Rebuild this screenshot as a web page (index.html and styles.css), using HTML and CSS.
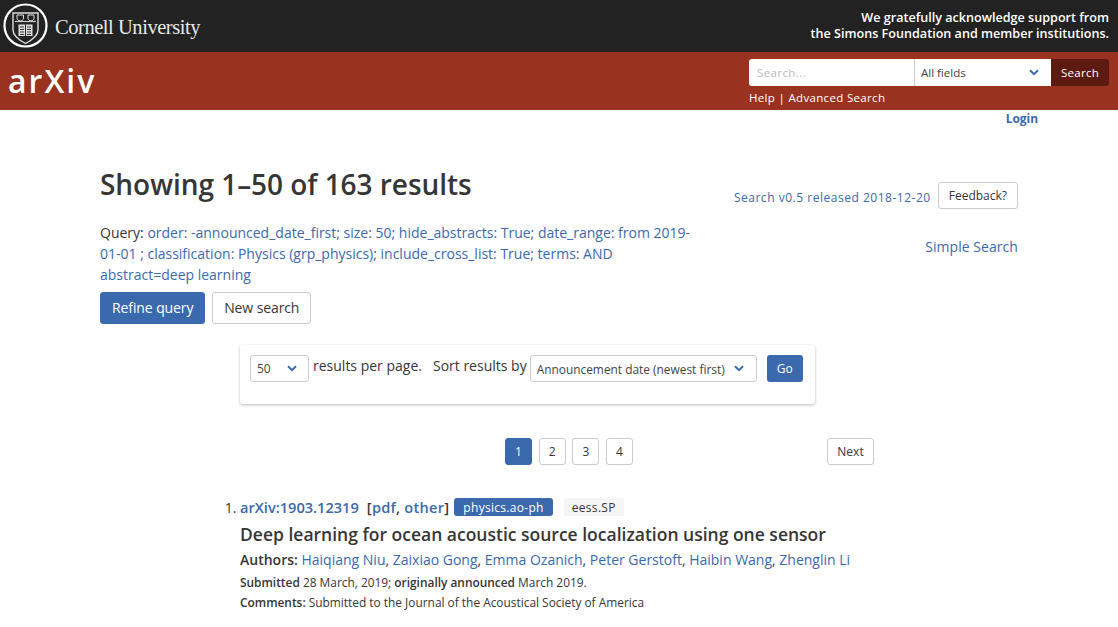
FILE: index.html
```html
<!DOCTYPE html>
<html lang="en">
<head>
<meta charset="utf-8">
<title>Search | arXiv e-print repository</title>
<link rel="stylesheet" href="styles.css">
</head>
<body>
<header class="cornell">
  <div class="brand">
    <svg class="seal" viewBox="0 0 46 46" width="46" height="46" aria-hidden="true">
      <circle cx="22.5" cy="22.5" r="21" fill="none" stroke="#fff" stroke-width="2.2"/>
      <path d="M10 10h25v17c0 6-6 10-12.500 13.500C16 37 10 33 10 27z" fill="none" stroke="#ddd" stroke-width="1.4"/>
      <path d="M12 18.500h21" stroke="#ccc" stroke-width="1.200"/>
      <path d="M14 12h6.500v3.500c0 1.200-1.500 2-3.200 2.500-1.800-.5-3.300-1.300-3.300-2.500zM25 12h6v3.500c0 1.200-1.400 2-3 2.500-1.700-.5-3-1.300-3-2.500z" fill="none" stroke="#ddd" stroke-width="1"/>
      <path d="M15.500 21.500h14v11.500h-14z" fill="#ddd"/>
      <path d="M22.500 21.500v11.500" stroke="#222" stroke-width="1"/>
      <path d="M17 24h4M17 26.500h4M17 29h4M17 31.500h4M24 24h4M24 26.500h4M24 29h4M24 31.500h4" stroke="#222" stroke-width=".9"/>
    </svg>
    <span class="cornell-name">Cornell University</span>
  </div>
  <p class="support">We gratefully acknowledge support from<br>the Simons Foundation and member institutions.</p>
</header>
<section class="arxiv-bar">
  <div class="arxiv-logo">arXiv</div>
  <div class="top-search">
    <div class="search-row">
      <div class="search-input">Search...</div>
      <div class="search-field"><span>All fields</span><svg class="chev" viewBox="0 0 10 7" width="10" height="7"><path d="M1 1.200l4 4 4-4" fill="none" stroke="#3b69ad" stroke-width="2"/></svg></div>
      <div class="search-btn">Search</div>
    </div>
    <div class="search-links">Help | Advanced Search</div>
  </div>
</section>
<nav class="login-row"><a class="login" href="#">Login</a></nav>
<main class="content">
  <div class="head-row">
    <div class="head-main">
      <h1>Showing 1–50 of 163 results</h1>
      <p class="query">Query: <a href="#">order: -announced_date_first; size: 50; hide_abstracts: True; date_range: from 2019-01-01 ; classification: Physics (grp_physics); include_cross_list: True; terms: AND abstract=deep learning</a></p>
      <div class="query-buttons">
        <a class="btn primary" href="#">Refine query</a>
        <a class="btn" href="#">New search</a>
      </div>
    </div>
    <div class="head-side">
      <div class="version-row">
        <a class="version" href="#">Search v0.5 released 2018-12-20</a>
        <a class="feedback" href="#">Feedback?</a>
      </div>
      <a class="simple" href="#">Simple Search</a>
    </div>
  </div>
  <div class="sort-box">
    <div class="select small"><span>50</span><svg class="chev" viewBox="0 0 10 7" width="10" height="7"><path d="M1 1.200l4 4 4-4" fill="none" stroke="#3b69ad" stroke-width="2"/></svg></div>
    <span class="sort-text">results per page.</span>
    <span class="sort-text second">Sort results by</span>
    <div class="select wide"><span>Announcement date (newest first)</span><svg class="chev" viewBox="0 0 10 7" width="10" height="7"><path d="M1 1.200l4 4 4-4" fill="none" stroke="#3b69ad" stroke-width="2"/></svg></div>
    <div class="go">Go</div>
  </div>
  <div class="pagination">
    <div class="pages">
      <a class="page current" href="#">1</a>
      <a class="page" href="#">2</a>
      <a class="page" href="#">3</a>
      <a class="page" href="#">4</a>
    </div>
    <a class="page next" href="#">Next</a>
  </div>
  <ol class="results">
    <li class="result">
      <div class="result-head">
        <a class="rid" href="#">arXiv:1903.12319</a>
        <span class="formats">[<a href="#">pdf</a>, <a href="#">other</a>]</span>
        <span class="tag primary-tag">physics.ao-ph</span>
        <span class="tag grey-tag">eess.SP</span>
      </div>
      <p class="title">Deep learning for ocean acoustic source localization using one sensor</p>
      <p class="authors"><b>Authors:</b> <a href="#">Haiqiang Niu</a>, <a href="#">Zaixiao Gong</a>, <a href="#">Emma Ozanich</a>, <a href="#">Peter Gerstoft</a>, <a href="#">Haibin Wang</a>, <a href="#">Zhenglin Li</a></p>
      <p class="meta"><b>Submitted</b> 28 March, 2019; <b>originally announced</b> March 2019.</p>
      <p class="meta comments"><b>Comments:</b> Submitted to the Journal of the Acoustical Society of America</p>
    </li>
  </ol>
</main>
</body>
</html>
```
FILE: styles.css
```css
* { box-sizing: border-box; }
html, body { margin: 0; padding: 0; }
body { font-family: "Open Sans", "Liberation Sans", sans-serif; color: #363636; background: #fff; font-size: 14px; overflow: hidden; height: 627px; }
a { color: #3b69ad; text-decoration: none; }
p, h1 { margin: 0; }

.cornell { height: 52px; background: #222; display: flex; justify-content: space-between; align-items: center; padding: 0 9px 0 3px; }
.brand { display: flex; align-items: center; }
.seal { display: block; }
.cornell-name { font-family: "Liberation Serif", serif; color: #e8e8e8; font-size: 20.5px; margin-left: 6px; letter-spacing: -0.45px; padding-top: 2px; }
.support { color: #fff; font-size: 12.6px; line-height: 16px; text-align: right; font-weight: 600; }

.arxiv-bar { height: 58px; background: #9a3220; display: flex; justify-content: space-between; padding: 7px 9px 0 8px; }
.arxiv-logo { color: #fff; font-size: 32px; font-weight: 600; letter-spacing: 2px; line-height: 44px; }
.top-search { width: 360px; }
.search-row { display: flex; height: 27px; font-size: 11.5px; }
.search-input { width: 165px; background: #fff; color: #bbb; padding: 0 8px; line-height: 27px; border-radius: 3px 0 0 3px; letter-spacing: .4px; }
.search-field { width: 137px; background: #fff; border-left: 1px solid #ccc; color: #444; padding: 0 12px 0 6px; display: flex; justify-content: space-between; align-items: center; }
.search-btn { width: 58px; background: #5c1a10; color: #fff; text-align: center; line-height: 27px; border-radius: 0 3px 3px 0; letter-spacing: .3px; }
.search-links { color: #fff; font-size: 11.5px; line-height: 16px; margin-top: 4px; letter-spacing: .33px; }

.login-row { height: 18px; padding-right: 80px; display: flex; justify-content: flex-end; }
.login { font-size: 12px; font-weight: 700; line-height: 18px; letter-spacing: -.05px; }

.content { padding: 0 100px; }
.head-row { display: flex; justify-content: space-between; }
.head-main { width: 600px; padding-top: 38px; }
h1 { font-size: 28px; font-weight: 600; line-height: 37px; color: #363636; letter-spacing: -.04px; }
.query { font-size: 14px; line-height: 21px; margin-top: 19px; }
.query-buttons { display: flex; gap: 7px; margin-top: 7px; }
.btn { height: 32px; line-height: 30px; padding: 0 10.75px; border: 1px solid #ccc; border-radius: 3px; font-size: 14px; color: #363636; letter-spacing: -.1px; }
.btn.primary { background: #3b69ad; border-color: #3b69ad; color: #fff; padding: 0 11px; }
.head-side { width: 300px; display: flex; flex-direction: column; align-items: flex-end; padding-top: 54px; }
.version-row { display: flex; align-items: center; gap: 7px; }
.version { font-size: 12px; letter-spacing: .52px; margin-top: 4px; }
.feedback { height: 27px; line-height: 25px; padding: 0 10px; border: 1px solid #ccc; border-radius: 3px; font-size: 12px; color: #363636; }
.simple { font-size: 14px; margin-top: 28px; line-height: 20px; letter-spacing: .05px; }

.sort-box { width: 575px; height: 59px; margin: 21px 0 0 140px; background: #fff; border-radius: 3px; box-shadow: 0 1px 3px rgba(0,0,0,.28); padding: 10px; display: flex; align-items: flex-start; }
.select { height: 27px; border: 1px solid #ccc; border-radius: 3px; display: flex; justify-content: space-between; align-items: center; padding: 0 11px 0 6px; font-size: 11.9px; color: #444; }
.select.small { width: 59px; font-size: 12px; }
.select.wide { width: 227px; padding: 0 12px 0 6px; margin-left: 3px; }
.sort-text { font-size: 14px; line-height: 22px; margin-left: 4px; }
.sort-text.second { margin-left: 11px; }
.go { width: 36px; height: 27px; margin-left: 10px; background: #3b69ad; color: #fff; border-radius: 3px; text-align: center; line-height: 27px; font-size: 12px; }

.pagination { width: 369px; margin: 34px 0 0 405px; display: flex; justify-content: space-between; }
.pages { display: flex; gap: 6.67px; }
.page { min-width: 27px; height: 27px; line-height: 25px; border: 1px solid #ccc; border-radius: 3px; text-align: center; font-size: 12px; color: #363636; }
.page.current { background: #3b69ad; border-color: #3b69ad; color: #fff; }
.page.next { width: 47px; }

.results { margin: 32px 0 0; padding: 0 0 0 140px; font-size: 14px; }
.result { line-height: 20px; }
.result-head { display: flex; align-items: center; height: 20px; font-size: 14.6px; font-weight: 600; }
.rid { margin-right: 8px; }
.formats { margin-right: 5px; letter-spacing: .25px; }
.tag { height: 18px; line-height: 19px; padding: 0 9px; border-radius: 3px; font-size: 12px; font-weight: 400; letter-spacing: .3px; }
.primary-tag { background: #3b69ad; color: #fff; }
.grey-tag { background: #f5f5f5; color: #363636; margin-left: 11px; padding: 0 8px; }
.title { font-size: 17.5px; font-weight: 600; line-height: 24px; margin-top: 5px; }
.authors { font-size: 14px; line-height: 20px; margin-top: 4px; }
.authors b { font-weight: 600; }
.meta { font-size: 11.9px; line-height: 16px; margin-top: 4px; }
.meta b { font-weight: 600; }
.comments { margin-top: 4px; }
```
